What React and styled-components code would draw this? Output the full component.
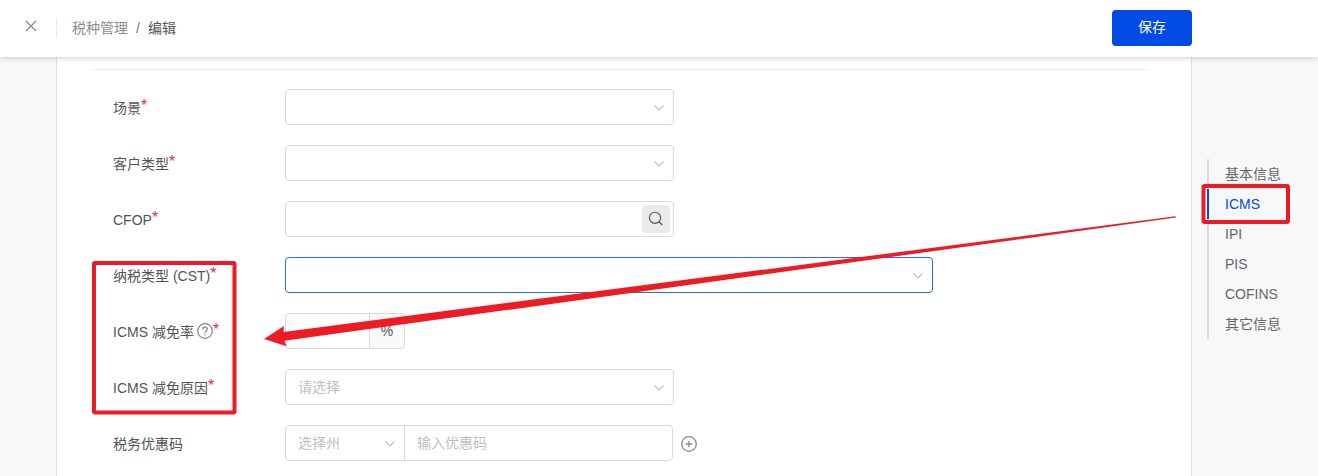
import React, { useState } from 'react';
import styled, { createGlobalStyle } from 'styled-components';

const sections = [
    { id: 'base', text: '基本信息' },
    { id: 'icms', text: 'ICMS' },
    { id: 'ipi', text: 'IPI' },
    { id: 'pis', text: 'PIS' },
    { id: 'cofins', text: 'COFINS' },
    { id: 'other', text: '其它信息' }
];

const Chevron = () => (
    <ChevronIcon width="10" height="6" viewBox="0 0 10 6" aria-hidden="true">
        <path d="M0.5 0.5 L5 5 L9.5 0.5" fill="none" stroke="#bfbfbf" strokeWidth="1.1" />
    </ChevronIcon>
);

const Select = ({ id, placeholder, width, active, joined }) => (
    <SelectBox $width={width}>
        <StyledSelect id={id} name={id} defaultValue="" $active={active} $joined={joined}>
            <option value="">{placeholder}</option>
        </StyledSelect>
        <Chevron />
    </SelectBox>
);

const Field = ({ id, label, required, help, children }) => (
    <Row>
        <StyledLabel htmlFor={id}>
            {label}
            {
                help ? (
                    <HelpIcon width="16" height="16" viewBox="0 0 16 16" aria-hidden="true">
                        <circle cx="8" cy="8" r="7.3" />
                        <path d="M5.7 6.5 C5.7 3.4 10.3 3.4 10.3 6.2 C10.3 7.9 8 7.9 8 9.8" />
                        <path d="M8 11 V12.3" />
                    </HelpIcon>
                ) : null
            }
            {required ? <Required>*</Required> : null}
        </StyledLabel>
        {children}
    </Row>
);

const App = () => {
    const [current, setCurrent] = useState('icms');

    return (
        <Page>
            <GlobalStyle />
            <Header>
                <CloseButton type="button" aria-label="关闭">
                    <svg width="12" height="12" viewBox="0 0 12 12" aria-hidden="true">
                        <path d="M1 1 L11 11 M11 1 L1 11" stroke="#888" strokeWidth="1.2" />
                    </svg>
                </CloseButton>
                <Breadcrumb>
                    <Crumb href="#list">税种管理</Crumb>
                    <Slash>/</Slash>
                    <span>编辑</span>
                </Breadcrumb>
                <SaveButton type="submit" form="tax-form">保存</SaveButton>
            </Header>

            <Body>
                <Panel id="tax-form" onSubmit={e => e.preventDefault()}>
                    <Divider />
                    <Fields>
                        <Field id="scene" label="场景" required>
                            <Select id="scene" width={389} />
                        </Field>
                        <Field id="customer" label="客户类型" required>
                            <Select id="customer" width={389} />
                        </Field>
                        <Field id="cfop" label="CFOP" required>
                            <SearchBox>
                                <SearchInput type="text" id="cfop" name="cfop" />
                                <SearchButton type="button" aria-label="搜索">
                                    <svg width="16" height="16" viewBox="0 0 16 16" aria-hidden="true">
                                        <circle cx="7" cy="6.8" r="5.6" fill="none" stroke="#555" strokeWidth="1.1" />
                                        <path d="M10.9 10.8 L14.4 14" stroke="#555" strokeWidth="1.3" />
                                    </svg>
                                </SearchButton>
                            </SearchBox>
                        </Field>
                        <Field id="cst" label="纳税类型 (CST)" required>
                            <Select id="cst" width={648} active />
                        </Field>
                        <Field id="rate" label="ICMS 减免率" required help>
                            <RateInput type="text" id="rate" name="rate" />
                            <Addon>%</Addon>
                        </Field>
                        <Field id="reason" label="ICMS 减免原因" required>
                            <Select id="reason" placeholder="请选择" width={389} />
                        </Field>
                        <Field id="state" label="税务优惠码">
                            <Select id="state" placeholder="选择州" width={120} joined />
                            <CodeInput type="text" name="code" aria-label="优惠码" placeholder="输入优惠码" />
                            <AddButton type="button" aria-label="添加">
                                <svg width="16" height="16" viewBox="0 0 16 16" aria-hidden="true">
                                    <circle cx="8" cy="8" r="7.3" />
                                    <path d="M8 4.8 V11.2 M4.8 8 H11.2" />
                                </svg>
                            </AddButton>
                        </Field>
                    </Fields>
                </Panel>

                <Side>
                    <Anchors>
                        {sections.map(({ id, text }) => (
                            <Anchor
                                key={id}
                                href={`#${id}`}
                                $active={id === current}
                                onClick={() => setCurrent(id)}
                            >
                                {text}
                            </Anchor>
                        ))}
                    </Anchors>
                </Side>
            </Body>

            {/* red marks: both frames and the arrow between them */}
            <Marks width="1318" height="476" viewBox="0 0 1318 476" aria-hidden="true">
                <rect x="94" y="263" width="140.5" height="149.5" rx="1" />
                <rect x="1203.5" y="186" width="84.5" height="36" rx="1" />
                <path d="M264 339 L284 326 L283.5 332 L1175.5 216.2 L1176 217.6 L284.3 340.8 L286.5 346.3 Z" />
            </Marks>
        </Page>
    );
};

export default App;

const GlobalStyle = createGlobalStyle`
    * {
        box-sizing: border-box;
    }
    body {
        margin: 0;
        background-color: #f7f8fa;
    }
    body, button, input, select {
        font-family: "Liberation Sans", "Noto Sans CJK SC", sans-serif;
        font-size: 14px;
        color: #555;
    }
`;

const Page = styled.div`
    position: relative;
    height: 100vh;
    overflow: hidden;
    display: flex;
    flex-direction: column;
`;

const Header = styled.header`
    position: relative;
    z-index: 1;
    flex: none;
    display: flex;
    align-items: center;
    height: 57px;
    padding: 0 126px 1px 6px;
    background-color: white;
    box-shadow: 0 1px 6px rgba(0,0,0,0.2);
`;

const CloseButton = styled.button`
    display: flex;
    justify-content: center;
    width: 50px;
    padding: 0 0 4px;
    border: none;
    background: none;
    cursor: pointer;
`;

const Breadcrumb = styled.nav`
    display: flex;
    align-items: center;
    gap: 8px;
    height: 20px;
    padding-left: 15px;
    border-left: 1px solid #ebebeb;
    line-height: 20px;
`;

const Crumb = styled.a`
    color: #8c8c8c;
    text-decoration: none;
`;

const Slash = styled.span`
    color: #777;
`;

const SaveButton = styled.button`
    width: 80px;
    height: 36px;
    margin-left: auto;
    padding: 0 0 4px;
    border: none;
    border-radius: 4px;
    background-color: #004be6;
    color: white;
    cursor: pointer;
`;

const Body = styled.div`
    flex: 1;
    display: flex;
`;

const Panel = styled.form`
    flex: 1;
    margin-left: 56px;
    padding: 12px 43px 0 35px;
    border: solid #e2e2e2;
    border-width: 0 1px;
    background-color: white;
`;

const Divider = styled.hr`
    height: 1px;
    margin: 0 0 19px;
    border: none;
    background-color: #ebebeb;
`;

const Fields = styled.div`
    display: flex;
    flex-direction: column;
    gap: 20px;
    padding-left: 21px;
`;

const Row = styled.div`
    display: flex;
    align-items: center;
    height: 36px;
`;

const StyledLabel = styled.label`
    display: flex;
    align-items: center;
    flex: none;
    width: 172px;
    padding-top: 2px;
    line-height: 20px;
`;

const Required = styled.span`
    padding-bottom: 4px;
    color: #f0284b;
    font-size: 16px;
    line-height: 16px;
`;

const HelpIcon = styled.svg`
    margin: 0 0 2px 3px;
    fill: none;
    stroke: #888;
    stroke-width: 1.3;
`;

const SelectBox = styled.div`
    position: relative;
    flex: none;
    width: ${({ $width }) => $width}px;
`;

const StyledSelect = styled.select`
    appearance: none;
    display: block;
    width: 100%;
    height: 36px;
    padding: 0 30px 0 12px;
    border: 1px solid ${({ $active }) => ($active ? '#2a6ce8' : '#d9d9d9')};
    border-radius: ${({ $joined }) => ($joined ? '4px 0 0 4px' : '4px')};
    outline: none;
    background-color: white;
    color: #bfbfbf;
`;

const ChevronIcon = styled.svg`
    position: absolute;
    right: 10px;
    top: 16px;
    pointer-events: none;
`;

const StyledInput = styled.input`
    height: 36px;
    padding: 0 12px;
    border: 1px solid #d9d9d9;
    border-radius: 4px;
    outline: none;
    background-color: white;
    &::placeholder {
        color: #bfbfbf;
    }
`;

const SearchBox = styled.div`
    display: flex;
    align-items: center;
    width: 389px;
    height: 36px;
    padding-right: 3px;
    border: 1px solid #d9d9d9;
    border-radius: 4px;
`;

const SearchInput = styled.input`
    flex: 1;
    min-width: 0;
    padding: 0 12px;
    border: none;
    outline: none;
    background: none;
`;

const SearchButton = styled.button`
    display: flex;
    justify-content: center;
    align-items: center;
    width: 28px;
    height: 28px;
    padding: 0;
    border: none;
    border-radius: 4px;
    background-color: #ebebeb;
    cursor: pointer;
`;

const RateInput = styled(StyledInput)`
    width: 85px;
    border-radius: 4px 0 0 4px;
`;

const Addon = styled.span`
    width: 36px;
    height: 36px;
    margin-left: -1px;
    border: 1px solid #d9d9d9;
    border-radius: 0 4px 4px 0;
    background-color: #fafafa;
    line-height: 34px;
    text-align: center;
`;

const CodeInput = styled(StyledInput)`
    width: 269px;
    margin-left: -1px;
    border-radius: 0 4px 4px 0;
`;

const AddButton = styled.button`
    display: flex;
    margin-left: 8px;
    padding: 2px 0 0;
    border: none;
    background: none;
    cursor: pointer;
    svg {
        fill: none;
        stroke: #888;
        stroke-width: 1.3;
    }
`;

const Side = styled.aside`
    flex: none;
    width: 126px;
    padding: 102px 0 0 15px;
`;

const Anchors = styled.nav`
    display: flex;
    flex-direction: column;
`;

const Anchor = styled.a`
    height: 30px;
    padding-left: 16px;
    border-left: 2px solid ${({ $active }) => ($active ? '#004be6' : '#d9d9d9')};
    color: ${({ $active }) => ($active ? '#004be6' : '#666')};
    line-height: 30px;
    text-decoration: none;
`;

const Marks = styled.svg`
    position: absolute;
    left: 0;
    top: 0;
    z-index: 2;
    pointer-events: none;
    rect {
        fill: none;
        stroke: #ed1c24;
        stroke-width: 4;
    }
    path {
        fill: #ed1c24;
    }
`;
